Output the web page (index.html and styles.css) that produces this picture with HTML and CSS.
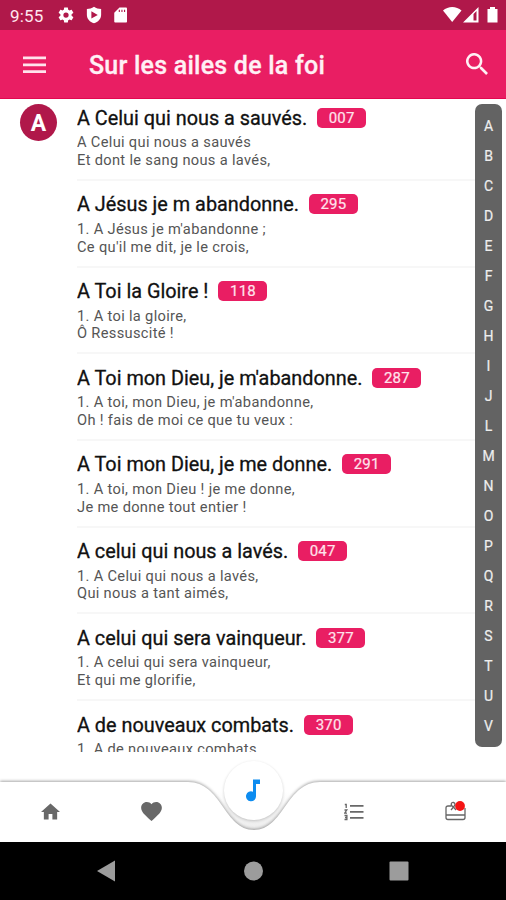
FILE: index.html
```html
<!DOCTYPE html>
<html lang="fr">
<head>
<meta charset="utf-8">
<title>Sur les ailes de la foi</title>
<link rel="stylesheet" href="styles.css">
</head>
<body>
<div class="app">
  <div class="status">
    <span class="clock">9:55</span>
    <svg class="s-icon" viewBox="0 0 24 24"><path fill-rule="evenodd" d="M19.4 13c0-.3.1-.6.1-1s0-.7-.1-1l2.2-1.600c.2-.2.2-.4.1-.6l-2-3.500c-.1-.2-.4-.3-.6-.2l-2.500 1c-.5-.4-1.100-.7-1.700-1L14.500 2.400c0-.2-.2-.4-.5-.4h-4c-.3 0-.5.2-.5.400L9.100 5.100c-.6.2-1.200.6-1.700 1l-2.500-1c-.2-.1-.5 0-.6.2l-2 3.500c-.1.2-.1.500.1.600L4.600 11c-.1.3-.1.700-.1 1s0 .7.100 1l-2.200 1.600c-.2.200-.2.400-.1.600l2 3.500c.1.200.4.300.6.200l2.500-1c.5.400 1.100.7 1.700 1l.4 2.700c0 .2.200.400.5.400h4c.3 0 .5-.2.500-.4l.4-2.700c.6-.2 1.200-.6 1.700-1l2.500 1c.2.100.5 0 .6-.2l2-3.500c.1-.2.100-.5-.1-.6zM12 15.500a3.500 3.500 0 1 1 0-7 3.500 3.500 0 0 1 0 7z"/></svg>
    <svg class="s-icon" viewBox="0 0 24 24"><path fill-rule="evenodd" d="M12 1c3 2 6 2.800 9.500 3v7.500c0 5.500-4 9.700-9.500 11.500-5.500-1.800-9.500-6-9.500-11.500V4C6 3.800 9 3 12 1zM8.500 7v9.500L17 12z"/></svg>
    <svg class="s-icon" viewBox="0 0 24 24"><path fill-rule="evenodd" d="M18.500 2H10L3 9v11.500c0 1 .8 1.500 1.500 1.500h14c1 0 1.500-.6 1.500-1.500v-17c0-1-.6-1.500-1.500-1.500zM9 5h1.500v3H9zm3.500 0H14v3h-1.500zM16 5h1.500v3H16z"/></svg>
    <svg class="signals" viewBox="0 0 56 18"><path d="M0 4.500C5-.2 13.500-.2 18.500 4.500L9.200 16z"/><path fill-rule="evenodd" d="M20 16.500 35.500 1v15.500zM30.500 8v6.500h3V5z"/><path d="M47 1h5v2h2.500v13.500h-10V3H47z"/></svg>
  </div>
  <header class="bar">
    <svg class="menu" viewBox="0 0 24 18"><path d="M0 .5h23v2.800H0zM0 7.400h23v2.800H0zM0 14.300h23v2.800H0z"/></svg>
    <h1>Sur les ailes de la foi</h1>
    <svg class="search" viewBox="3 3 17.500 17.500"><path d="M15.500 14h-.79l-.28-.27A6.500 6.500 0 1 0 13.730 14.430l.27.280v.79l5 4.990L20.490 19zm-6 0a4.500 4.500 0 1 1 0-9 4.500 4.500 0 0 1 0 9z"/></svg>
  </header>
  <main class="content">
    <div class="avatar">A</div>
    <ul class="list">
      <li><h2>A Celui qui nous a sauvés.<b>007</b></h2><p>A Celui qui nous a sauvés<br>Et dont le sang nous a lavés,</p></li>
      <li><h2>A Jésus je m abandonne.<b>295</b></h2><p>1. A Jésus je m'abandonne ;<br>Ce qu'il me dit, je le crois,</p></li>
      <li><h2>A Toi la Gloire !<b>118</b></h2><p>1. A toi la gloire,<br>Ô Ressuscité !</p></li>
      <li><h2>A Toi mon Dieu, je m'abandonne.<b>287</b></h2><p>1. A toi, mon Dieu, je m'abandonne,<br>Oh ! fais de moi ce que tu veux :</p></li>
      <li><h2>A Toi mon Dieu, je me donne.<b>291</b></h2><p>1. A toi, mon Dieu ! je me donne,<br>Je me donne tout entier !</p></li>
      <li><h2>A celui qui nous a lavés.<b>047</b></h2><p>1. A Celui qui nous a lavés,<br>Qui nous a tant aimés,</p></li>
      <li><h2>A celui qui sera vainqueur.<b>377</b></h2><p>1. A celui qui sera vainqueur,<br>Et qui me glorifie,</p></li>
      <li><h2>A de nouveaux combats.<b>370</b></h2><p>1. A de nouveaux combats,</p></li>
    </ul>
    <div class="index"><span>A</span><span>B</span><span>C</span><span>D</span><span>E</span><span>F</span><span>G</span><span>H</span><span>I</span><span>J</span><span>L</span><span>M</span><span>N</span><span>O</span><span>P</span><span>Q</span><span>R</span><span>S</span><span>T</span><span>U</span><span>V</span></div>
  </main>
  <nav class="tabs">
    <svg class="curve" viewBox="0 0 506 92"><defs><linearGradient id="valley" x1="0" y1="0" x2="0" y2="1"><stop offset="0" stop-color="#fff"/><stop offset=".6" stop-color="#f2f2f2"/><stop offset="1" stop-color="#eee"/></linearGradient></defs><path fill="url(#valley)" d="M208 42C226 58 232 80 254 80S282 58 300 42z"/><path class="sheet" d="M0 32H188C222 32 224 80 254 80S286 32 320 32H506V92H0z"/></svg>
    <span class="tab"><svg class="home" viewBox="2 3 20 17"><path d="M10 20v-6h4v6h5v-8h3L12 3 2 12h3v8z"/></svg></span>
    <span class="tab"><svg class="heart" viewBox="2 3 20 18.350"><path d="m12 21.350-1.450-1.320C5.400 15.360 2 12.280 2 8.500 2 5.420 4.420 3 7.500 3c1.740 0 3.410.81 4.500 2.090C13.090 3.810 14.760 3 16.500 3 19.580 3 22 5.420 22 8.500c0 3.780-3.400 6.860-8.550 11.540z"/></svg></span>
    <span class="tab"><span class="fab"><svg viewBox="0 0 16 22"><path d="M8 0h7v4.500h-4v12A5 5 0 1 1 8 12.200z"/></svg></span></span>
    <span class="tab"><svg class="numbers" viewBox="0 0 20 18"><path d="M6 2h13.500v1.800H6zM6 8h13.500v1.800H6zM6 14h13.500v1.800H6z"/><path class="line" d="M.8 1.500H2.200V5M.5 7h2.300L.6 10.200h2.400M.5 12.500h2.400v4H.5M1 14.500h1.800"/></svg></span>
    <span class="tab"><svg class="gift" viewBox="0 0 21 20"><path class="line" d="M6 5H3Q1 5 1 7v9.500Q1 18.500 3 18.500h15q2 0 2-2V7M1 14h19M6 9 8.500 6 11 9M8.500 6C5 4.500 6 1 8.500 1.500S10 4.500 8.500 6"/><circle cx="15" cy="5" r="4.900"/></svg></span>
  </nav>
  <footer class="system">
    <svg viewBox="0 0 506 58"><path d="M97 29 115 18.500v21z"/><circle cx="253.500" cy="29" r="9.500"/><rect x="389.500" y="19.500" width="19" height="19" rx="1"/></svg>
  </footer>
</div>
</body>
</html>
```
FILE: styles.css
```css
* { box-sizing: border-box; }
body { margin: 0; font-family: Roboto, "Liberation Sans", sans-serif; background: #fff; }
h1, h2, p, ul { margin: 0; padding: 0; }
svg { display: block; flex: none; }
.app { width: 506px; height: 900px; display: flex; flex-direction: column; overflow: hidden; }
.status { height: 30px; flex: none; background: #b0184a; color: #ffe6ee; display: flex; align-items: center; padding: 0 8px 0 10px; }
.clock { width: 47px; font-size: 17px; letter-spacing: .2px; line-height: 32px; padding-top: 1px; }
.s-icon { width: 18px; height: 18px; margin-right: 9.500px; fill: #fff; }
.signals { width: 56px; height: 18px; margin-left: auto; margin-right: -1px; fill: #fff; }
.bar { height: 69px; flex: none; background: #e91e63; border-bottom: 1px solid #e2084f; display: flex; align-items: center; padding: 0 18px 0 23px; color: #fff; }
.menu { width: 24px; height: 18px; fill: #ffe3ec; margin-right: 42px; margin-top: 1px; }
.bar h1 { font-size: 25px; font-weight: 500; letter-spacing: .23px; line-height: 30px; color: #fff0f5; padding-top: 3px; white-space: nowrap; -webkit-text-stroke: .3px #fff0f5; }
.search { width: 22px; height: 22px; margin-left: auto; margin-top: -1px; fill: #fff0f5; }
.content { height: 654px; flex: none; display: flex; overflow: hidden; padding-top: 5px; }
.avatar { width: 37px; height: 37px; flex: none; margin-left: 20px; border-radius: 50%; background: #b0184a; color: #fff; font-weight: 700; font-size: 23px; line-height: 40px; text-align: center; }
.list { list-style: none; width: 398px; height: 658px; overflow: hidden; margin-left: 20px; margin-top: -9.800px; flex: none; }
.list li { height: 86.700px; border-bottom: 2px solid #f7f7f7; padding-top: 12px; }
.list h2 { display: flex; align-items: center; font-size: 19.830px; font-weight: 400; line-height: 24px; height: 24px; color: #111; padding-top: 1px; white-space: nowrap; -webkit-text-stroke: .3px #111; }
.list b { width: 49px; height: 20px; margin: -2px 0 0 10px; border-radius: 5px; background: #e91e63; color: #ffe3ec; font-size: 15px; font-weight: 400; line-height: 21px; text-align: center; letter-spacing: .2px; -webkit-text-stroke: .2px #ffe3ec; }
.list p { font-size: 14.650px; line-height: 17.700px; letter-spacing: .32px; color: #555; padding-top: 4px; white-space: nowrap; }
.index { width: 27px; height: 643px; margin-right: 4px; border-radius: 7px; background: #636363; color: #eee; display: flex; flex-direction: column; align-items: center; padding: 7px 0; font-size: 14px; -webkit-text-stroke: .2px #eee; }
.index span { flex: 1; line-height: 30px; }
.tabs { height: 89px; flex: none; position: relative; display: flex; padding-top: 29px; border-bottom: 1px solid #999; }
.curve { position: absolute; left: 0; top: -3px; width: 506px; height: 92px; }
.sheet { fill: #fff; filter: drop-shadow(0 -1px 1.500px rgba(0,0,0,.35)); }
.tab { flex: 1; position: relative; display: flex; align-items: center; justify-content: center; fill: #686868; }
.home { width: 19px; height: 17px; }
.heart { width: 21px; height: 19px; }
.fab { width: 59px; height: 59px; flex: none; margin-top: -42px; border-radius: 50%; background: #fff; box-shadow: 0 1px 3px rgba(0,0,0,.2); display: flex; align-items: center; justify-content: center; fill: #0d8cf0; }
.fab svg { width: 16px; height: 23px; }
.numbers { width: 20px; height: 18px; }
.gift { width: 21px; height: 20px; margin-top: -1px; }
.line { fill: none; stroke: #666; stroke-width: 1.300; }
.gift circle { fill: #f51414; }
.system { height: 58px; flex: none; background: #000; fill: #9c9c9c; }
.system svg { width: 506px; height: 58px; }
```
